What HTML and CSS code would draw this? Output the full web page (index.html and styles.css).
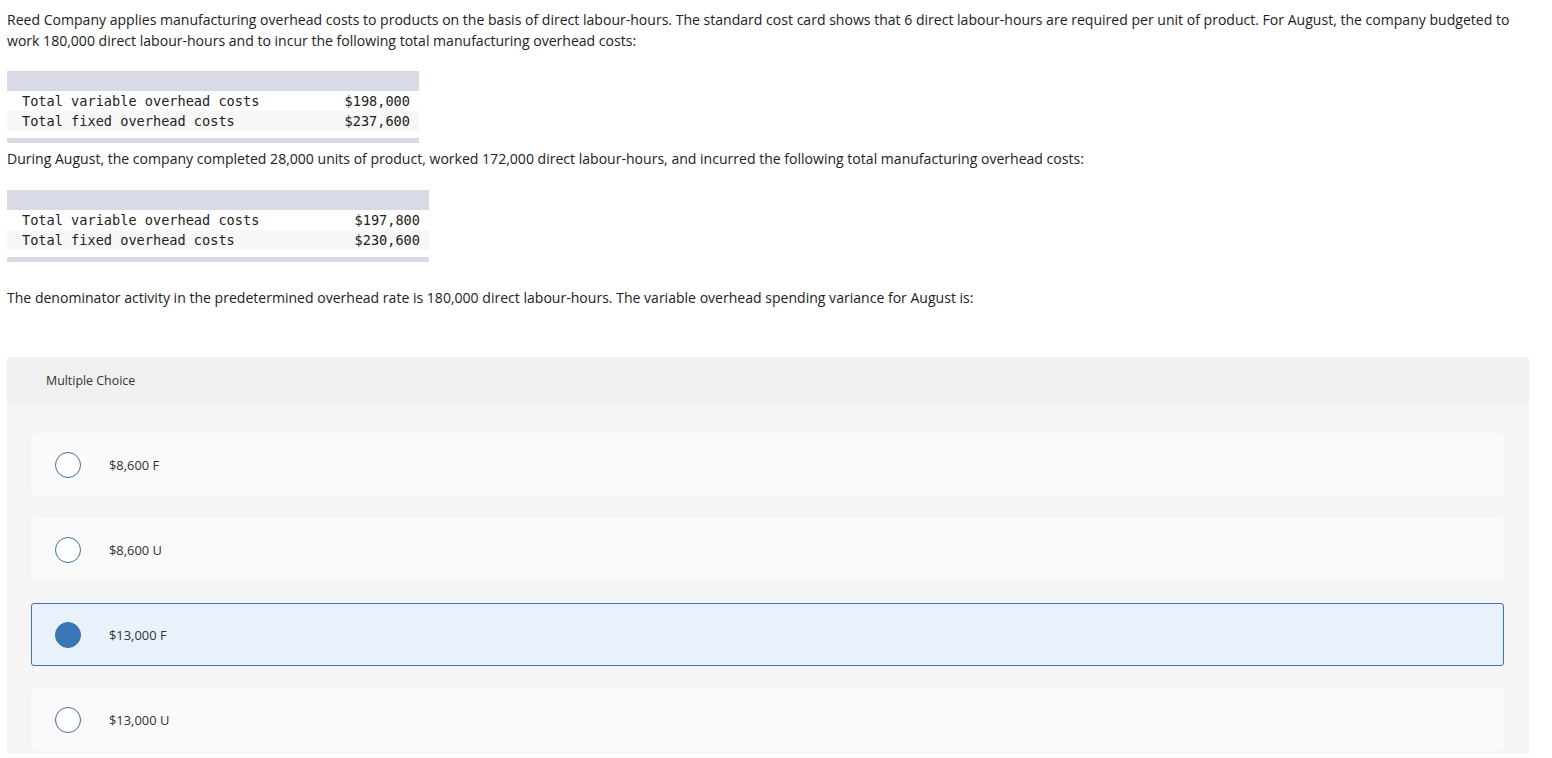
FILE: index.html
```html
<!DOCTYPE html>
<html>
<head>
<meta charset="utf-8">
<link rel="stylesheet" href="styles.css">
</head>
<body>
<div class="page">
  <p class="para">Reed Company applies manufacturing overhead costs to products on the basis of direct labour-hours. The standard cost card shows that 6 direct labour-hours are required per unit of product. For August, the company budgeted to work 180,000 direct labour-hours and to incur the following total manufacturing overhead costs:</p>

  <div class="table t1">
    <div class="thead"></div>
    <div class="row"><span>Total variable overhead costs</span><span>$198,000</span></div>
    <div class="row alt"><span>Total fixed overhead costs</span><span>$237,600</span></div>
    <div class="tfoot"></div>
  </div>

  <p class="para p2">During August, the company completed 28,000 units of product, worked 172,000 direct labour-hours, and incurred the following total manufacturing overhead costs:</p>

  <div class="table t2">
    <div class="thead"></div>
    <div class="row"><span>Total variable overhead costs</span><span>$197,800</span></div>
    <div class="row alt"><span>Total fixed overhead costs</span><span>$230,600</span></div>
    <div class="tfoot"></div>
  </div>

  <p class="para p3">The denominator activity in the predetermined overhead rate is 180,000 direct labour-hours. The variable overhead spending variance for August is:</p>

  <div class="mc">
    <div class="mc-head">Multiple Choice</div>
    <div class="mc-body">
      <div class="opt"><span class="radio"></span><span class="label">$8,600 F</span></div>
      <div class="opt"><span class="radio"></span><span class="label">$8,600 U</span></div>
      <div class="opt selected"><span class="radio"></span><span class="label">$13,000 F</span></div>
      <div class="opt"><span class="radio"></span><span class="label">$13,000 U</span></div>
    </div>
  </div>
</div>
</body>
</html>
```
FILE: styles.css
```css
html, body {
  margin: 0;
  padding: 0;
  background: #fff;
}
body {
  font-family: "Open Sans", "Lato", Arial, sans-serif;
  color: #2b2b2b;
}
.page {
  padding: 9px 23px 0 7px;
}
.para {
  margin: 0;
  font-size: 14.05px;
  line-height: 21px;
  color: #222;
}
.table {
  margin-top: 20px;
  font-family: "DejaVu Sans Mono", "Liberation Mono", monospace;
  font-size: 13.6px;
  color: #222;
}
.t1 { width: 412px; }
.t2 { width: 422px; margin-top: 21px; }
.thead {
  height: 20px;
  background: #d8dbe5;
}
.row {
  display: flex;
  justify-content: space-between;
  height: 20px;
  line-height: 20px;
  padding: 0 9px 0 15px;
  background: #fff;
}
.row.alt { background: #f7f7f7; }
.tfoot {
  margin-top: 7px;
  height: 5px;
  background: #d8dbe5;
}
.p2 { margin-top: 5px; }
.p3 { margin-top: 25px; }
.mc {
  margin-top: 49px;
  background: #f5f5f5;
  border-radius: 2px;
}
.mc-head {
  height: 47px;
  background: #f0f0f0;
  display: flex;
  align-items: center;
  padding-left: 39px;
  font-size: 12.4px;
  color: #333;
  border-radius: 2px 2px 0 0;
}
.mc-body {
  padding: 29px 25px 3px 24px;
  display: flex;
  flex-direction: column;
  gap: 22px;
}
.opt {
  height: 63px;
  box-sizing: border-box;
  background: #fafafa;
  border: 1px solid #fafafa;
  border-radius: 3px;
  display: flex;
  align-items: center;
  padding-left: 23px;
}
.opt.selected {
  background: #e9f1fb;
  border-color: #3b76bb;
}
.radio {
  width: 26px;
  height: 26px;
  box-sizing: border-box;
  border: 1.5px solid #3c6e9e;
  border-radius: 50%;
  background: #fff;
  flex: none;
}
.selected .radio {
  background: #3a75b7;
  border-color: #3a6ea6;
}
.label {
  margin-left: 28px;
  font-size: 12.9px;
  color: #333;
}
```
